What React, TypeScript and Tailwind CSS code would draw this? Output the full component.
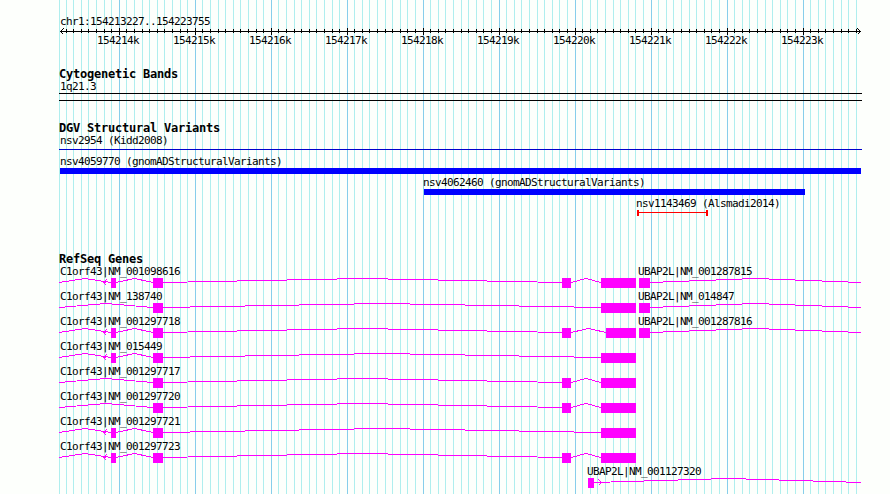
import { type ReactNode } from 'react';

const START = 154213227;
const END = 154223755;
const SCALE = 800 / (END - START);

const toX = (bp: number) => Math.max(59, Math.floor(60.5 + (bp - START) * SCALE));

const ticks = Array.from({ length: 106 }, (_, i) => {
  const bp = 154213200 + i * 100;
  return { bp, x: toX(bp), major: bp % 1000 === 0 };
});

type Block = [start: number, end: number];

type Gene = {
  name: string;
  exons: Block[];
  introns: Block[];
  arrow?: { x: number; dir: 'left' | 'right' };
};

const leftShort: Block[] = [[59, 111], [116, 153]];
const leftLong: Block[] = [[59, 153]];

const c1orf43 = (id: string, small: boolean, middle: boolean, last = 601): Gene => ({
  name: `C1orf43|${id}`,
  exons: [
    ...(small ? [[111, 116] as Block] : []),
    [153, 163],
    ...(middle ? [[562, 571] as Block] : []),
    [last, 636],
  ],
  introns: [
    ...(small ? leftShort : leftLong),
    ...(middle ? ([[163, 562], [571, last]] as Block[]) : [[163, last] as Block]),
  ],
  arrow: small ? { x: 103, dir: 'left' } : undefined,
});

const ubap2l = (id: string): Gene => ({
  name: `UBAP2L|${id}`,
  exons: [[639, 650]],
  introns: [[650, 861]],
});

const geneRows: Gene[][] = [
  [c1orf43('NM_001098616', true, true), ubap2l('NM_001287815')],
  [c1orf43('NM_138740', false, false), ubap2l('NM_014847')],
  [c1orf43('NM_001297718', true, true, 606), ubap2l('NM_001287816')],
  [c1orf43('NM_015449', true, false)],
  [c1orf43('NM_001297717', false, true)],
  [c1orf43('NM_001297720', false, true)],
  [c1orf43('NM_001297721', true, false)],
  [c1orf43('NM_001297723', true, true)],
];

const lastGene: Gene = {
  name: 'UBAP2L|NM_001127320',
  exons: [[588, 594]],
  introns: [[594, 863]],
  arrow: { x: 601, dir: 'right' },
};

function TrackTitle({ children }: { children: ReactNode }) {
  return (
    <h2 className="whitespace-pre text-[12px] font-bold leading-[13px] tracking-[-0.224px]">
      {children}
    </h2>
  );
}

function Grid() {
  return (
    <svg className="absolute inset-0" width="890" height="494" shapeRendering="crispEdges">
      {ticks.map(({ bp, x, major }) => (
        <rect key={bp} x={x} y="0" width="1" height="494" fill={major ? '#87ceeb' : '#afeeee'} />
      ))}
    </svg>
  );
}

function Ruler() {
  return (
    <header className="flex h-[31px] flex-col">
      <p className="pl-px leading-[12px]">chr1:154213227..154223755</p>
      <svg className="block" width="803" height="7" viewBox="59 0 803 7" shapeRendering="crispEdges">
        <rect x="60" y="3" width="801" height="1" />
        {ticks
          .filter(({ x }) => x > 60)
          .map(({ bp, x, major }) => (
            <rect key={bp} x={x} y={major ? 0 : 1} width="1" height={major ? 7 : 4} />
          ))}
        <path d="M63.5 0.5 L60.5 3.5 L63.5 6.5 M857.5 0.5 L860.5 3.5 L857.5 6.5" fill="none" stroke="black" />
      </svg>
      <div className="grid grid-cols-[repeat(10,76px)] pl-[38px] leading-[12px]">
        {ticks
          .filter(({ major }) => major)
          .map(({ bp }) => (
            <span key={bp}>{`${bp / 1000}k`}</span>
          ))}
      </div>
    </header>
  );
}

function GeneGlyph({ gene }: { gene: Gene }) {
  const { exons, introns, arrow } = gene;
  const back = arrow?.dir === 'left' ? 3 : -3;

  return (
    <g stroke="#ff00ff" fill="none">
      {introns.map(([a, b]) => (
        <polyline key={a} points={`${a},5.5 ${(a + b) / 2},1.5 ${b},5.5`} />
      ))}
      {arrow && (
        <path
          d={`M${arrow.x + back + 0.5} 2.5 L${arrow.x + 0.5} 5.5 L${arrow.x + back + 0.5} 8.5 M${arrow.x} 5.5 h3`}
        />
      )}
      {exons.map(([a, b]) => (
        <rect key={a} x={a} y="1" width={b - a} height="10" fill="#ff00ff" stroke="none" />
      ))}
    </g>
  );
}

function GeneTrack({ genes }: { genes: Gene[] }) {
  return (
    <svg className="block" width="802" height="12" viewBox="59 0 802 12" shapeRendering="crispEdges">
      {genes.map((gene) => (
        <GeneGlyph key={gene.name} gene={gene} />
      ))}
    </svg>
  );
}

export default function App() {
  return (
    <main className="relative h-[494px] w-[890px] overflow-hidden bg-[#fdfffc] font-['DejaVu_Sans_Mono','Liberation_Mono',monospace] text-[11px] tracking-[-0.622px] text-black">
      <Grid />
      <div className="relative flex flex-col pl-[59px] pr-7 pt-4">
        <Ruler />

        <section className="flex flex-col pt-[21px]">
          <TrackTitle>Cytogenetic Bands</TrackTitle>
          <p className="pl-px leading-[12px]">1q21.3</p>
          <div className="h-2 border-y border-black" />
        </section>

        <section className="flex flex-col pt-[21px]">
          <TrackTitle>DGV Structural Variants</TrackTitle>
          <div className="flex h-[21px] flex-col">
            <p className="pl-px leading-[12px]">nsv2954 (Kidd2008)</p>
            <div className="h-[3px] border-b border-[#0000cc]" />
          </div>
          <div className="flex h-[21px] flex-col pl-px">
            <p className="leading-[12px]">nsv4059770 (gnomADStructuralVariants)</p>
            <div className="h-1.5 w-[801px] bg-[#0000ff]" />
          </div>
          <div className="flex h-[21px] flex-col pl-[364px]">
            <p className="leading-[12px]">nsv4062460 (gnomADStructuralVariants)</p>
            <div className="ml-px h-1.5 w-[381px] bg-[#0000ff]" />
          </div>
          <div className="flex h-[21px] flex-col pl-[577px]">
            <p className="leading-[12px]">nsv1143469 (Alsmadi2014)</p>
            <div className="ml-px flex h-1.5 w-[71px] border-x-2 border-[#ff0000] pt-0.5">
              <div className="h-px grow bg-[#ff0000]" />
            </div>
          </div>
        </section>

        <section className="flex flex-col pt-[34px]">
          <TrackTitle>RefSeq Genes</TrackTitle>
          <ul className="flex flex-col gap-0.5">
            {geneRows.map((genes) => (
              <li key={genes[0].name} className="flex flex-col">
                <div className="grid h-[11px] grid-cols-[578px_1fr] pl-px leading-[12px]">
                  {genes.map((gene) => (
                    <span key={gene.name}>{gene.name}</span>
                  ))}
                </div>
                <GeneTrack genes={genes} />
              </li>
            ))}
            <li className="flex flex-col">
              <p className="h-[11px] pl-[528px] leading-[12px]">{lastGene.name}</p>
              <GeneTrack genes={[lastGene]} />
            </li>
          </ul>
        </section>
      </div>
    </main>
  );
}
